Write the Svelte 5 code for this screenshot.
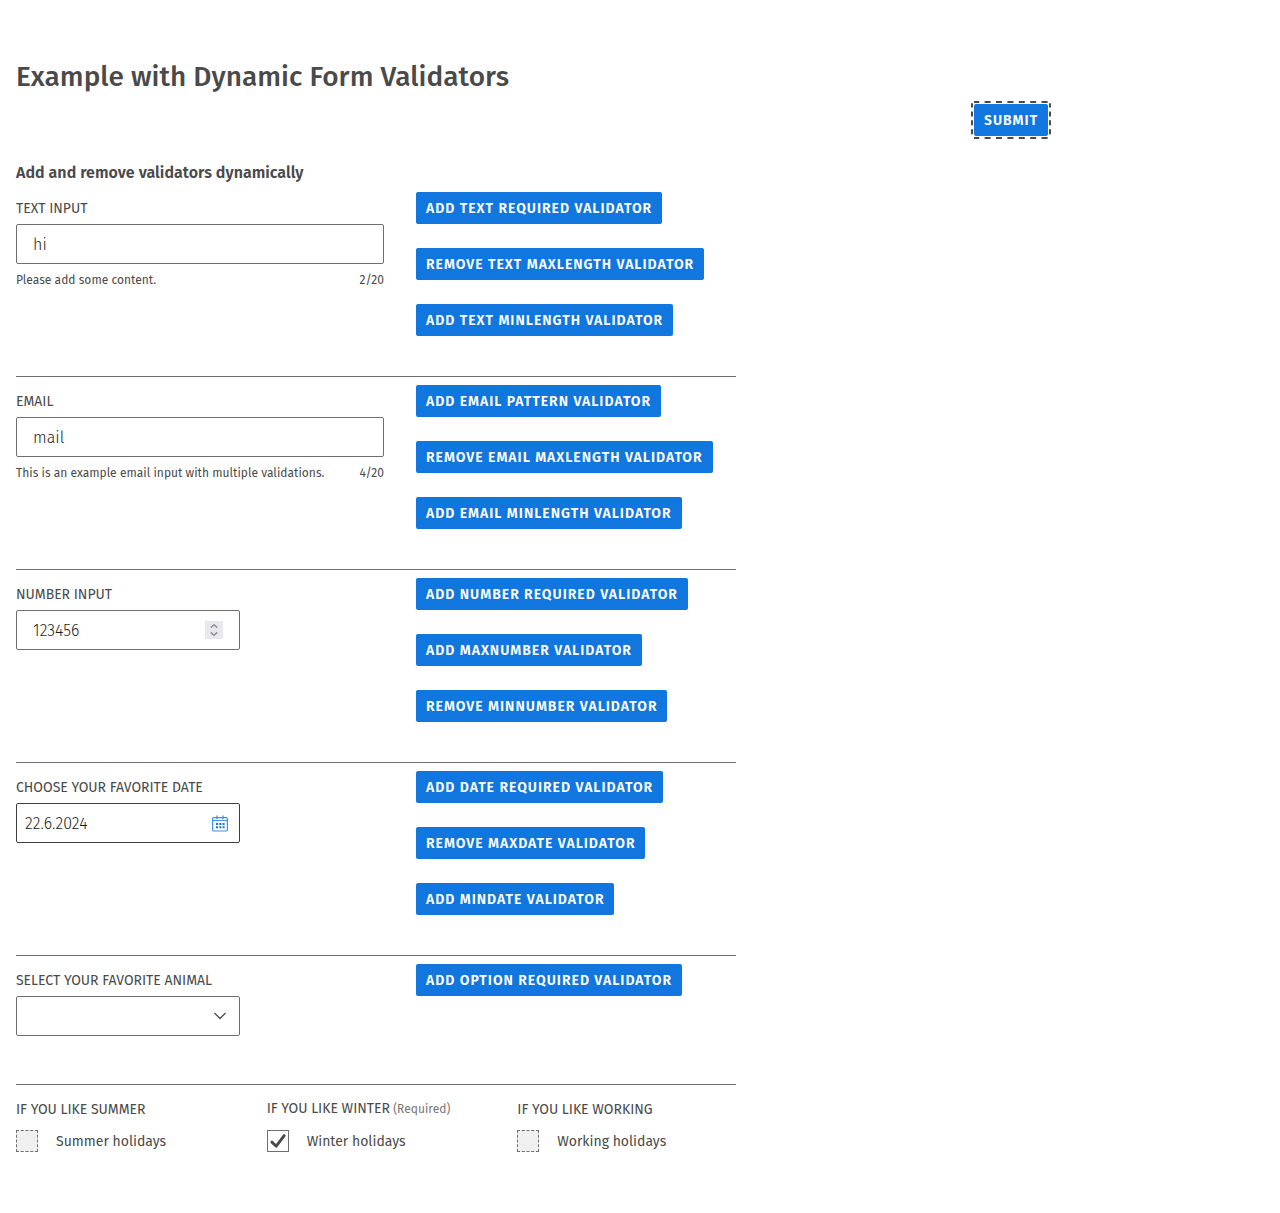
<script>
  const rows = [
    {
      kind: 'text', label: 'TEXT INPUT', value: 'hi',
      hint: 'Please add some content.', count: '2/20',
      buttons: ['Add text required validator', 'Remove text maxLength validator', 'Add text minLength validator']
    },
    {
      kind: 'text', label: 'EMAIL', value: 'mail',
      hint: 'This is an example email input with multiple validations.', count: '4/20',
      buttons: ['Add email pattern validator', 'Remove email maxLength validator', 'Add email minLength validator']
    },
    {
      kind: 'number', label: 'NUMBER INPUT', value: '123456',
      buttons: ['Add number required validator', 'Add maxNumber validator', 'Remove minNumber validator']
    },
    {
      kind: 'date', label: 'CHOOSE YOUR FAVORITE DATE', value: '22.6.2024',
      buttons: ['Add date required validator', 'Remove maxDate validator', 'Add minDate validator']
    },
    {
      kind: 'select', label: 'SELECT YOUR FAVORITE ANIMAL', value: '',
      buttons: ['Add option required validator']
    }
  ];

  const checks = [
    { label: 'IF YOU LIKE SUMMER', text: 'Summer holidays', on: false },
    { label: 'IF YOU LIKE WINTER', text: 'Winter holidays', on: true },
    { label: 'IF YOU LIKE WORKING', text: 'Working holidays', on: false }
  ];
</script>

<main>
  <h1>Example with Dynamic Form Validators</h1>
  <div class="actions">
    <button class="submit">Submit
      <svg class="focus" width="80" height="38" viewBox="0 0 80 38" fill="none" stroke="#4a4a4a" stroke-width="2">
        <path d="M3 1H77M3 37H77" stroke-dasharray="6 5.4" stroke-dashoffset="0.8" />
        <path d="M1 2.3V36M79 2.3V36" stroke-dasharray="5 3.9" stroke-dashoffset="0.8" />
      </svg>
    </button>
  </div>
  <h2>Add and remove validators dynamically</h2>

  {#each rows as row}
    <section class="row" class:short={row.kind === 'select'}>
      <div class="field">
        <div class="label">{row.label}</div>
        <div class="input {row.kind}">
          {#if row.value}<span>{row.value}</span>{/if}
          {#if row.kind === 'number'}
            <svg width="18" height="18" viewBox="0 0 18 18">
              <rect width="18" height="18" fill="#e9e9ed" />
              <path d="M5.8 6.6 9 3.7l3.2 2.9M5.8 11.4 9 14.3l3.2-2.9" fill="none" stroke="#8f8f9d" stroke-width="1.5" />
            </svg>
          {:else if row.kind === 'date'}
            <svg width="16" height="18" viewBox="0 0 16 18" fill="none" stroke="#3d92ea">
              <rect x=".6" y="3.6" width="14.8" height="13.4" rx="1.3" stroke-width="1.2" />
              <path d="M.6 6.5h14.8" stroke-width="1.1" />
              <path d="M5 1.4v3.8M11 1.4v3.8" stroke-width="1.3" />
              <path d="M4 10.1h8.6M4 13.2h8.6" stroke="#1176dd" stroke-width="2" stroke-dasharray="2.1 1.2" />
            </svg>
          {:else if row.kind === 'select'}
            <svg width="12" height="8" viewBox="0 0 12 8">
              <path d="M.5 1 6 6.5 11.5 1" fill="none" stroke="#4a4a4a" stroke-width="1.3" />
            </svg>
          {/if}
        </div>
        {#if row.hint}
          <div class="hint">
            <span>{row.hint}</span>
            <span>{row.count}</span>
          </div>
        {/if}
      </div>
      <div class="buttons">
        {#each row.buttons as text}
          <button>{text}</button>
        {/each}
      </div>
    </section>
  {/each}

  <section class="checks">
    {#each checks as check}
      <div>
        <div class="label" class:required={check.on}>
          {check.label}
          {#if check.on}<small>(Required)</small>{/if}
        </div>
        <div class="option">
          <svg width="22" height="22" viewBox="0 0 22 22">
            {#if check.on}
              <rect x=".5" y=".5" width="21" height="21" fill="#fff" stroke="#6f6f6f" />
              <path d="M4.9 12.1 9.2 16.2 17.2 5.6" fill="none" stroke="#4a4a4a" stroke-width="2.9" stroke-linecap="round" stroke-linejoin="round" />
            {:else}
              <rect width="22" height="22" fill="#f0f0f0" />
              <path d="M0 .5h22M0 21.5h22M.5 0v22M21.5 0v22" fill="none" stroke="#6f6f6f" stroke-dasharray="3 1.75" />
            {/if}
          </svg>
          <span>{check.text}</span>
        </div>
      </div>
    {/each}
  </section>
</main>

<style>
  :global(body) {
    background: #fff;
  }
  main {
    box-sizing: border-box;
    min-height: 1213px;
    padding: 57px 16px 0;
    color: #4a4a4a;
    font-family: 'Fira Sans', 'Noto Sans', sans-serif;
  }
  h1 {
    margin: 0;
    font-size: 28px;
    line-height: 40px;
    font-weight: 500;
    letter-spacing: 0.03px;
  }
  h2 {
    margin: 25px 0 0;
    font-size: 16px;
    line-height: 24px;
    font-weight: 600;
    letter-spacing: 0.03px;
  }
  .actions {
    margin: 7px 0 0 958px;
    height: 32px;
  }
  button {
    display: block;
    height: 32px;
    padding: 1px 10px 0;
    border: 0;
    border-radius: 2px;
    background: #1176dd;
    color: #fff;
    font: 600 14px/32px 'Fira Sans', 'Noto Sans', sans-serif;
    letter-spacing: 0.98px;
    text-align: left;
    text-transform: uppercase;
    white-space: nowrap;
  }
  .submit {
    position: relative;
  }
  .focus {
    position: absolute;
    top: -3px;
    left: -3px;
  }
  .row {
    display: grid;
    grid-template-columns: 368px 1fr;
    column-gap: 32px;
    box-sizing: border-box;
    width: 720px;
    height: 193px;
    padding-top: 8px;
    border-bottom: 1px solid #6f6f6f;
  }
  h2 + .row {
    margin-top: -1px;
  }
  .short {
    height: 129px;
  }
  .label {
    box-sizing: border-box;
    height: 32px;
    padding-top: 1px;
    font-size: 14px;
    line-height: 32px;
    letter-spacing: -0.02px;
    white-space: nowrap;
  }
  .input {
    display: flex;
    align-items: center;
    justify-content: space-between;
    box-sizing: border-box;
    height: 40px;
    padding: 0 16px;
    border: 1px solid #6f6f6f;
    border-radius: 2px;
    color: #1b1b1b;
    font-size: 16px;
    font-weight: 300;
    letter-spacing: 0.06px;
  }
  .number,
  .date,
  .select {
    width: 224px;
  }
  .date {
    padding: 0 11px 0 8px;
    border-color: #3f3f3f;
  }
  .select {
    justify-content: flex-end;
    padding-right: 13px;
  }
  .hint {
    display: flex;
    justify-content: space-between;
    font-size: 12px;
    line-height: 32px;
    letter-spacing: 0.02px;
  }
  .buttons {
    display: flex;
    flex-direction: column;
    align-items: flex-start;
    gap: 24px;
  }
  .checks {
    display: grid;
    grid-template-columns: repeat(3, 1fr);
    column-gap: 32px;
    width: 720px;
    padding-top: 8px;
  }
  .checks .label {
    height: 37px;
  }
  .checks .required {
    line-height: 30px;
  }
  small {
    margin-left: -0.5px;
    color: #777;
    font-size: 12px;
    letter-spacing: 0.03px;
  }
  .option {
    display: flex;
    align-items: center;
    gap: 18px;
    height: 22px;
    font-size: 14px;
    line-height: 22px;
  }
  .option span {
    padding-top: 2px;
  }
</style>
